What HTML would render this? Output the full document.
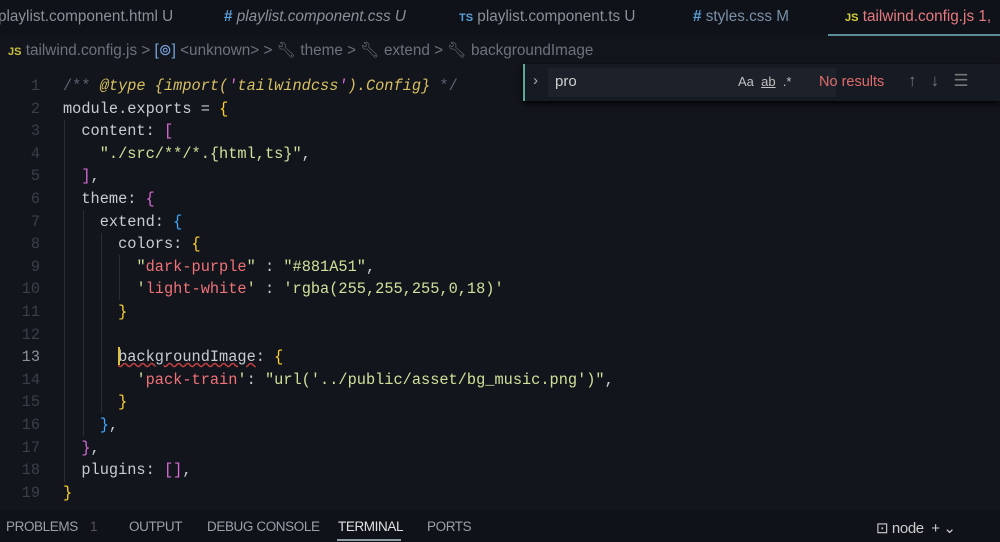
<!DOCTYPE html>
<html><head><style>
body{margin:0;width:1000px;height:542px;background:#12151c;overflow:hidden;font-family:"Liberation Sans",sans-serif;position:relative}
.tabs{position:absolute;top:0;left:0;width:1000px;height:35px;background:#0f1218;font-size:15.3px;color:#8a9099}
.tab{position:absolute;top:8px;white-space:nowrap}
.bc{position:absolute;top:41px;left:8px;font-size:15.3px;color:#6c727c;white-space:nowrap}
.code{position:absolute;top:75px;left:0;font-family:"Liberation Mono",monospace;font-size:15.3px;line-height:22.6px;color:#c8ccd2;white-space:pre}
.ln{position:absolute;left:0;width:40px;text-align:right;color:#3a3f48}
.tx{position:absolute;left:63px}
.s{color:#cfe09a}.k{color:#f07178}.y{color:#ffd22e}.p{color:#d66bd6}.b{color:#3fa8ff}.c{color:#5c6370}.i{color:#d8bf60;font-style:italic}
.find{position:absolute;left:523px;top:64px;width:477px;height:37px;background:#161a22;box-shadow:0 2px 6px #000}
.panel{position:absolute;top:510px;left:0;width:1000px;height:32px;background:#0f1218;font-size:13.5px;color:#9aa0a8}
.panel span{position:absolute;top:9px;letter-spacing:-0.4px}
.guide{position:absolute;width:1px;background:#2a2e36}
</style></head><body>
<div class="tabs">
<div class="tab" style="left:-2px">playlist.component.html <span style="color:#8a9099">U</span></div>
<div class="tab" style="left:224px"><span style="color:#5aa0d8;font-weight:bold">#</span> <i>playlist.component.css U</i></div>
<div class="tab" style="left:459px"><span style="color:#5aa0d8;font-size:11px;font-weight:bold">TS</span> playlist.component.ts U</div>
<div class="tab" style="left:693px"><span style="color:#5aa0d8;font-weight:bold">#</span> <span style="color:#7a8fa8">styles.css M</span></div>
<div class="tab" style="left:845px;color:#e57a80"><span style="color:#d7d23a;font-size:11px;font-weight:bold">JS</span> tailwind.config.js 1,</div>
<div style="position:absolute;left:828px;top:34px;width:172px;height:2px;background:#5a8c9a"></div>
</div>
<div class="bc"><span style="color:#c9c13a;font-size:11px;font-weight:bold">JS</span> tailwind.config.js &gt; <span style="color:#7aa6e0">[⊚]</span> &lt;unknown&gt; &gt; 🔧︎ theme &gt; 🔧︎ extend &gt; 🔧︎ backgroundImage</div>
<div class="guide" style="left:64px;top:120px;height:362px"></div>
<div class="guide" style="left:83px;top:210px;height:226px"></div>
<div class="guide" style="left:101px;top:233px;height:180px"></div>
<div class="guide" style="left:119px;top:255px;height:45px"></div>
<div class="code">
<div class="ln" style="top:0">1</div><div class="tx" style="top:0"><span class="c">/** </span><span class="i">@type {import(<span class="p">'</span>tailwindcss<span class="p">'</span>).Config}</span><span class="c"> */</span></div>
<div class="ln" style="top:22.6px">2</div><div class="tx" style="top:22.6px">module.exports = <span class="y">{</span></div>
<div class="ln" style="top:45.2px">3</div><div class="tx" style="top:45.2px">  content: <span class="p">[</span></div>
<div class="ln" style="top:67.8px">4</div><div class="tx" style="top:67.8px">    <span class="s">"./src/**/*.{html,ts}"</span>,</div>
<div class="ln" style="top:90.4px">5</div><div class="tx" style="top:90.4px">  <span class="p">]</span>,</div>
<div class="ln" style="top:113px">6</div><div class="tx" style="top:113px">  theme: <span class="p">{</span></div>
<div class="ln" style="top:135.6px">7</div><div class="tx" style="top:135.6px">    extend: <span class="b">{</span></div>
<div class="ln" style="top:158.2px">8</div><div class="tx" style="top:158.2px">      colors: <span class="y">{</span></div>
<div class="ln" style="top:180.8px">9</div><div class="tx" style="top:180.8px">        <span class="s">"</span><span class="k">dark-purple</span><span class="s">"</span> : <span class="s">"#881A51"</span>,</div>
<div class="ln" style="top:203.4px">10</div><div class="tx" style="top:203.4px">        <span class="s">'</span><span class="k">light-white</span><span class="s">'</span> : <span class="s">'rgba(255,255,255,0,18)'</span></div>
<div class="ln" style="top:226px">11</div><div class="tx" style="top:226px">      <span class="y">}</span></div>
<div class="ln" style="top:248.6px">12</div>
<div class="ln" style="top:271.2px;color:#8a8f98">13</div><div class="tx" style="top:271.2px">      <span style="text-decoration:underline wavy #c04040">backgroundImage</span>: <span class="y">{</span></div>
<div class="ln" style="top:293.8px">14</div><div class="tx" style="top:293.8px">        <span class="s">'</span><span class="k">pack-train</span><span class="s">'</span>: <span class="s">"url('../public/asset/bg_music.png')"</span>,</div>
<div class="ln" style="top:316.4px">15</div><div class="tx" style="top:316.4px">      <span class="y">}</span></div>
<div class="ln" style="top:339px">16</div><div class="tx" style="top:339px">    <span class="b">}</span>,</div>
<div class="ln" style="top:361.6px">17</div><div class="tx" style="top:361.6px">  <span class="p">}</span>,</div>
<div class="ln" style="top:384.2px">18</div><div class="tx" style="top:384.2px">  plugins: <span class="p">[]</span>,</div>
<div class="ln" style="top:406.8px">19</div><div class="tx" style="top:406.8px"><span class="y">}</span></div>
</div>
<div style="position:absolute;left:118px;top:347px;width:2px;height:18px;background:#e0c040"></div>
<div class="find">
<div style="position:absolute;left:0;top:0;width:2px;height:37px;background:#5aa898"></div>
<div style="position:absolute;left:10px;top:8px;color:#aaa;font-size:15px">›</div>
<div style="position:absolute;left:25px;top:4px;width:288px;height:29px;background:#1d212a"></div>
<div style="position:absolute;left:32px;top:9px;color:#d0d0d0;font-size:15px">pro</div>
<div style="position:absolute;left:215px;top:10px;color:#c0c0c0;font-size:13px">Aa &nbsp;<u>ab</u> &nbsp;.*</div>
<div style="position:absolute;left:296px;top:10px;color:#e06c6c;font-size:14.5px">No results</div>
<div style="position:absolute;left:385px;top:7px;color:#777;font-size:17px">↑ &nbsp; ↓ &nbsp; ☰</div>
</div>
<div class="panel">
<span style="left:6px">PROBLEMS</span><span style="left:90px;color:#555">1</span>
<span style="left:129px">OUTPUT</span><span style="left:207px">DEBUG CONSOLE</span>
<span style="left:338px;color:#e0e0e0">TERMINAL</span><span style="left:427px">PORTS</span>
<div style="position:absolute;left:337px;top:29px;width:64px;height:2px;background:#8a9aa0"></div>
<span style="left:876px;color:#ccc;font-size:15px">⊡ node &nbsp;+ ⌄</span>
</div>
</body></html>
